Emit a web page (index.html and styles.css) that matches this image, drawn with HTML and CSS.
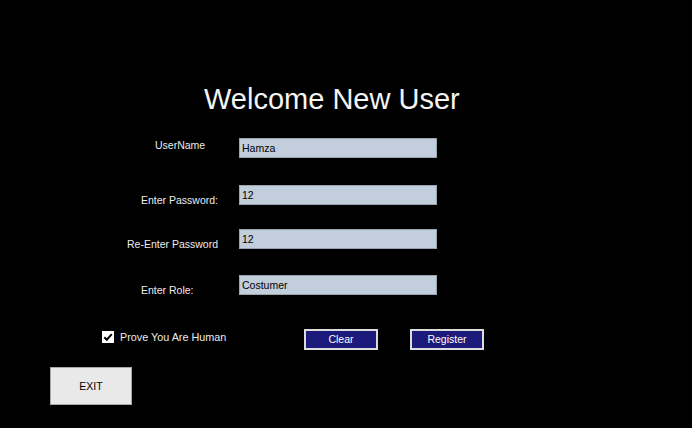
FILE: index.html
```html
<!DOCTYPE html>
<html lang="en">
<head>
<meta charset="utf-8">
<title>Welcome New User</title>
<link rel="stylesheet" href="styles.css">
</head>
<body>
<main class="screen">
  <h1 class="title">Welcome New User</h1>
  <form class="form">
    <div class="row row-user">
      <span class="lab-cell"><label class="lab lab-top lab-user" for="u">UserName</label></span>
      <input class="field" id="u" type="text" value="Hamza">
    </div>
    <div class="row row-pass">
      <span class="lab-cell"><label class="lab lab-pass" for="p">Enter Password:</label></span>
      <input class="field" id="p" type="text" value="12">
    </div>
    <div class="row row-repass">
      <span class="lab-cell"><label class="lab lab-repass" for="r">Re-Enter Password</label></span>
      <input class="field" id="r" type="text" value="12">
    </div>
    <div class="row row-role">
      <span class="lab-cell"><label class="lab lab-role" for="o">Enter Role:</label></span>
      <input class="field" id="o" type="text" value="Costumer">
    </div>
    <div class="actions">
      <div class="human">
        <span class="check"><svg viewBox="0 0 12 12" width="12" height="12"><path d="M2.3 6.2 L4.8 8.7 L9.8 3.2" fill="none" stroke="#000" stroke-width="2"/></svg></span>
        <span class="human-text">Prove You Are Human</span>
      </div>
      <button type="button" class="btn btn-clear">Clear</button>
      <button type="button" class="btn btn-register">Register</button>
    </div>
    <button type="button" class="exit">EXIT</button>
  </form>
</main>
</body>
</html>
```
FILE: styles.css
```css
html, body {
  margin: 0;
  padding: 0;
  background: #000;
}
body {
  width: 692px;
  height: 428px;
  overflow: hidden;
  font-family: "Liberation Sans", Arial, sans-serif;
  color: #f0f0f0;
}
.screen {
  padding-top: 83px;
}
.title {
  margin: 0 0 0 204px;
  font-size: 29px;
  line-height: 32px;
  font-weight: normal;
  color: #f4f4f4;
}
.form {
  margin: 0;
}
.row {
  display: flex;
  height: 20px;
}
.row-user { margin-top: 23px; }
.row-pass { margin-top: 27px; }
.row-repass { margin-top: 24px; }
.row-role { margin-top: 26px; }
.lab-cell {
  width: 239px;
  display: flex;
  align-items: flex-end;
}
.lab {
  font-size: 10.5px;
  line-height: 12px;
  color: #ececec;
  white-space: nowrap;
  margin-bottom: -1px;
}
.lab-top {
  align-self: flex-start;
  margin-top: 1px;
  margin-bottom: 0;
}
.lab-user { margin-left: 155px; }
.lab-pass { margin-left: 141px; }
.lab-repass { margin-left: 127px; }
.lab-role { margin-left: 141px; }
.field {
  box-sizing: border-box;
  width: 198px;
  height: 20px;
  margin: 0;
  padding: 0 0 1px 2px;
  border: 1px solid #9aa4af;
  background: #c2cedb;
  font-family: "Liberation Sans", Arial, sans-serif;
  font-size: 10.5px;
  line-height: 17px;
  color: #000;
  outline: none;
}
.actions {
  display: flex;
  align-items: flex-start;
  margin-top: 34px;
  height: 21px;
}
.human {
  display: flex;
  align-items: center;
  margin-left: 102px;
  margin-top: 2px;
  width: 202px;
}
.check {
  width: 12px;
  height: 12px;
  background: #fff;
  display: flex;
}
.human-text {
  margin-left: 6px;
  font-size: 10.8px;
  line-height: 12px;
  color: #ececec;
  white-space: nowrap;
}
.btn {
  box-sizing: border-box;
  width: 74px;
  height: 21px;
  margin: 0;
  padding: 0;
  border: 2px solid #dcdcdc;
  background: #1c1a7a;
  color: #fff;
  font-family: "Liberation Sans", Arial, sans-serif;
  font-size: 10.5px;
  line-height: 17px;
}
.btn-register {
  margin-left: 32px;
}
.exit {
  display: block;
  box-sizing: border-box;
  width: 82px;
  height: 38px;
  margin: 17px 0 0 50px;
  padding: 0;
  border: 1px solid #a8a8a8;
  background: #e9e9e9;
  color: #000;
  font-family: "Liberation Sans", Arial, sans-serif;
  font-size: 10.5px;
}
```
